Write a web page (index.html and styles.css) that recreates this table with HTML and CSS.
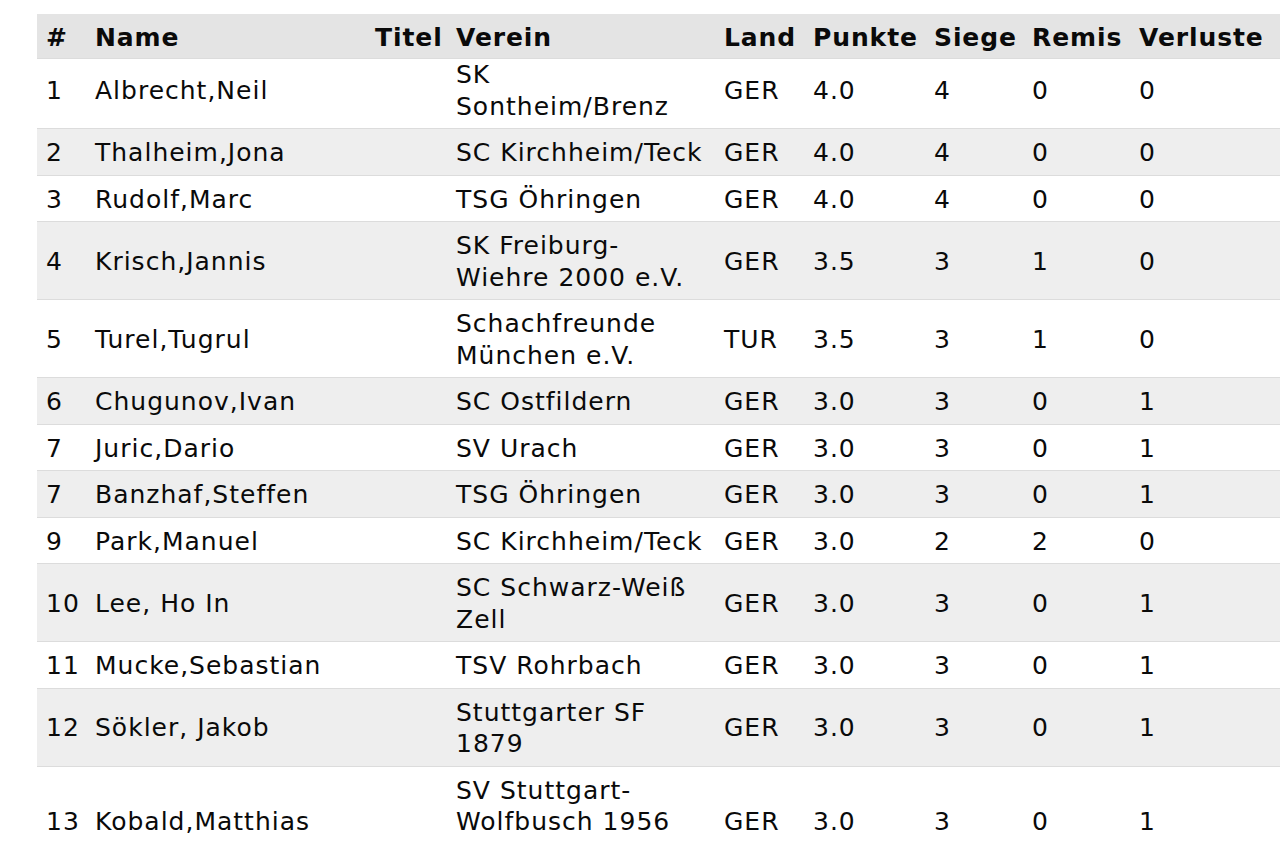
FILE: index.html
```html
<!DOCTYPE html>
<html lang="de">
<head>
<meta charset="utf-8">
<title>Rangliste</title>
<link rel="stylesheet" href="styles.css">
</head>
<body>
<div class="page">
<table class="standings">
<colgroup>
<col class="c-rank"><col class="c-name"><col class="c-title"><col class="c-club"><col class="c-land"><col class="c-pts"><col class="c-win"><col class="c-draw"><col class="c-loss">
</colgroup>
<thead>
<tr><th>#</th><th>Name</th><th class="right">Titel</th><th>Verein</th><th>Land</th><th>Punkte</th><th>Siege</th><th>Remis</th><th>Verluste</th></tr>
</thead>
<tbody>
<tr class="first"><td>1</td><td>Albrecht,Neil</td><td></td><td>SK Sontheim/Brenz</td><td>GER</td><td>4.0</td><td>4</td><td>0</td><td>0</td></tr>
<tr><td>2</td><td>Thalheim,Jona</td><td></td><td>SC Kirchheim/Teck</td><td>GER</td><td>4.0</td><td>4</td><td>0</td><td>0</td></tr>
<tr><td>3</td><td>Rudolf,Marc</td><td></td><td>TSG Öhringen</td><td>GER</td><td>4.0</td><td>4</td><td>0</td><td>0</td></tr>
<tr><td>4</td><td>Krisch,Jannis</td><td></td><td>SK Freiburg-Wiehre 2000 e.V.</td><td>GER</td><td>3.5</td><td>3</td><td>1</td><td>0</td></tr>
<tr><td>5</td><td>Turel,Tugrul</td><td></td><td>Schachfreunde München e.V.</td><td>TUR</td><td>3.5</td><td>3</td><td>1</td><td>0</td></tr>
<tr><td>6</td><td>Chugunov,Ivan</td><td></td><td>SC Ostfildern</td><td>GER</td><td>3.0</td><td>3</td><td>0</td><td>1</td></tr>
<tr><td>7</td><td>Juric,Dario</td><td></td><td>SV Urach</td><td>GER</td><td>3.0</td><td>3</td><td>0</td><td>1</td></tr>
<tr><td>7</td><td>Banzhaf,Steffen</td><td></td><td>TSG Öhringen</td><td>GER</td><td>3.0</td><td>3</td><td>0</td><td>1</td></tr>
<tr><td>9</td><td>Park,Manuel</td><td></td><td>SC Kirchheim/Teck</td><td>GER</td><td>3.0</td><td>2</td><td>2</td><td>0</td></tr>
<tr><td>10</td><td>Lee, Ho In</td><td></td><td>SC Schwarz-Weiß Zell</td><td>GER</td><td>3.0</td><td>3</td><td>0</td><td>1</td></tr>
<tr><td>11</td><td>Mucke,Sebastian</td><td></td><td>TSV Rohrbach</td><td>GER</td><td>3.0</td><td>3</td><td>0</td><td>1</td></tr>
<tr><td>12</td><td>Sökler, Jakob</td><td></td><td>Stuttgarter SF 1879</td><td>GER</td><td>3.0</td><td>3</td><td>0</td><td>1</td></tr>
<tr class="tall"><td>13</td><td>Kobald,Matthias</td><td></td><td class="club">SV Stuttgart-Wolfbusch 1956</td><td>GER</td><td>3.0</td><td>3</td><td>0</td><td>1</td></tr>
</tbody>
</table>
</div>
</body>
</html>
```
FILE: styles.css
```css
html, body {
  margin: 0;
  padding: 0;
  background: #ffffff;
  overflow: hidden;
}
.page {
  padding: 14px 0 0 37px;
}
.standings {
  border-collapse: collapse;
  table-layout: fixed;
  width: 1260px;
  font-family: "DejaVu Sans", Verdana, sans-serif;
  font-size: 25px;
  line-height: 31.5px;
  color: #0a0a0a;
}
.c-rank { width: 49px; }
.c-name { width: 280px; }
.c-title { width: 81px; }
.c-club { width: 268px; }
.c-land { width: 89px; }
.c-pts { width: 121px; }
.c-win { width: 98px; }
.c-draw { width: 107px; }
.c-loss { width: 167px; }
.standings th,
.standings td {
  padding: 8px 9px 6px;
  text-align: left;
  vertical-align: middle;
  letter-spacing: 1px;
}
.standings th {
  background: #e4e4e4;
  font-weight: bold;
  padding-top: 8px;
  padding-bottom: 4.5px;
  white-space: nowrap;
  letter-spacing: 0.9px;
}
.standings th.right {
  text-align: right;
}
.standings tbody tr {
  border-top: 1px solid #dcdcdc;
}
.standings tbody tr:nth-child(even) {
  background: #eeeeee;
}
.standings tr.first td {
  padding-top: 0;
  padding-bottom: 6px;
}
.standings tr.tall td {
  height: 94.5px;
}
.standings tr.tall td.club {
  vertical-align: top;
}
```
